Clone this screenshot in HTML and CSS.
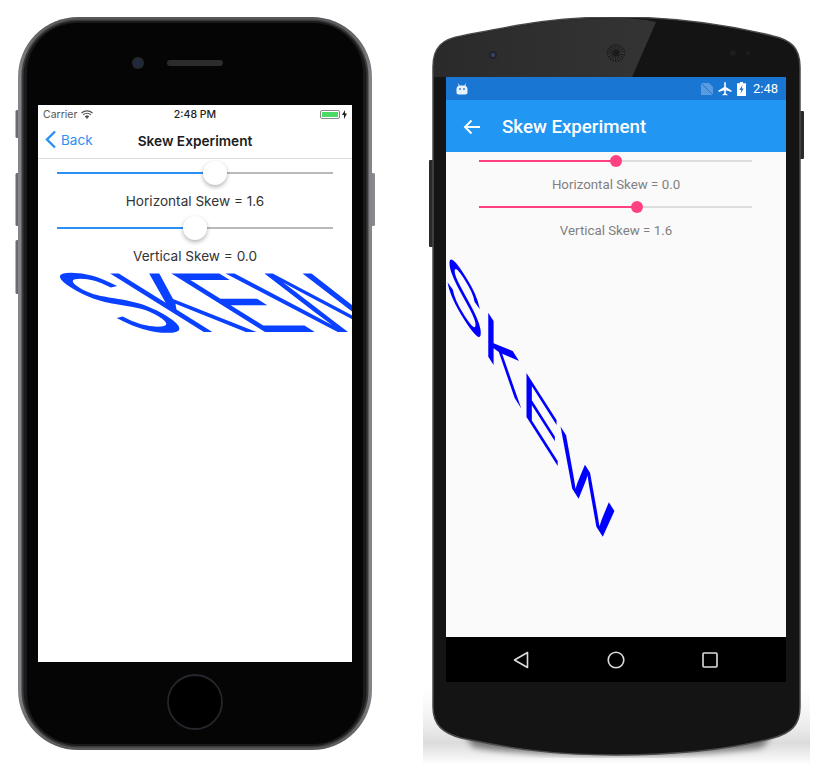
FILE: index.html
```html
<!DOCTYPE html>
<html lang="en">
<head>
  <meta charset="UTF-8">
  <meta name="viewport" content="width=device-width, initial-scale=1.0">
  <title>Skew Experiment</title>
  <link rel="stylesheet" href="styles.css">
</head>
<body>
  <div class="iphone">
    <svg class="body-art" width="362" height="741" viewBox="0 0 362 741">
      <defs>
        <linearGradient id="rim" x1="0" y1="0" x2="0" y2="1">
          <stop offset="0" stop-color="#58585b"/>
          <stop offset="0.08" stop-color="#858589"/>
          <stop offset="0.92" stop-color="#858589"/>
          <stop offset="1" stop-color="#58585b"/>
        </linearGradient>
      </defs>
      <rect x="1.5" y="93" width="4" height="28" rx="1.5" fill="#6b6b70"/>
      <rect x="1.5" y="156" width="4" height="53" rx="1.5" fill="#6b6b70"/>
      <rect x="1.5" y="223" width="4" height="54" rx="1.5" fill="#6b6b70"/>
      <rect x="356.5" y="156" width="4.5" height="53" rx="1.5" fill="#8a8a8e"/>
      <rect x="4" y="0" width="354" height="733" rx="60" fill="url(#rim)"/>
      <rect x="7.5" y="2.5" width="347" height="728" rx="57" fill="#3a3a3c"/>
      <rect x="9.5" y="4" width="343" height="725" rx="55" fill="#1a1a1b"/>
      <rect x="13" y="6" width="336" height="721" rx="50" fill="#050505"/>
      <circle cx="124" cy="46" r="6" fill="#26282d"/>
      <circle cx="124" cy="46" r="3" fill="#1c2a4a"/>
      <rect x="153" y="43" width="56" height="6" rx="3" fill="#2c2c2e"/>
      <circle cx="181" cy="685" r="27" fill="#000" stroke="#23262b" stroke-width="1.8"/>
    </svg>
    <main class="ios-screen">
      <div class="ios-status">
        <span class="carrier">Carrier
          <svg width="12" height="9" viewBox="0 0 12 9"><path d="M0.5 3 A8 8 0 0 1 11.5 3 M2.2 4.8 A5.4 5.4 0 0 1 9.8 4.8" fill="none" stroke="#555" stroke-width="1.2"/><path d="M6 9 L3.8 6.4 A3 3 0 0 1 8.2 6.4 Z" fill="#555"/></svg>
        </span>
        <span class="ios-clock">2:48 PM</span>
        <span class="ios-battery">
          <span class="cell"><span class="charge"></span></span>
          <svg width="5" height="9" viewBox="0 0 5 9"><path d="M3 0 L0 5 H2 L2 9 L5 3.6 H3 Z" fill="#222"/></svg>
        </span>
      </div>
      <nav class="ios-nav">
        <span class="back">
          <svg width="12" height="19" viewBox="0 0 12 19"><path d="M10 1.5 L2 9.5 L10 17.5" fill="none" stroke="#2b8ff5" stroke-width="2.4"/></svg>
          Back
        </span>
        <span class="ios-title">Skew Experiment</span>
      </nav>
      <div class="ios-slider">
        <span class="fill" style="width:158px"></span><span class="thumb"></span><span class="rest"></span>
      </div>
      <p class="ios-label">Horizontal Skew = 1.6</p>
      <div class="ios-slider">
        <span class="fill" style="width:138px"></span><span class="thumb"></span><span class="rest"></span>
      </div>
      <p class="ios-label">Vertical Skew = 0.0</p>
      <div class="skew-h">SKEW</div>
    </main>
  </div>

  <div class="android">
    <svg class="body-art" width="390" height="751" viewBox="0 0 390 751">
      <defs>
        <linearGradient id="floor" x1="0" y1="0" x2="0" y2="1">
          <stop offset="0" stop-color="#fff" stop-opacity="0"/>
          <stop offset="0.75" stop-color="#dcdcdc"/>
          <stop offset="1" stop-color="#fff"/>
        </linearGradient>
        <linearGradient id="gloss" x1="0" y1="0" x2="1" y2="0">
          <stop offset="0" stop-color="#2a2a2a"/>
          <stop offset="1" stop-color="#343434"/>
        </linearGradient>
        <filter id="blur"><feGaussianBlur stdDeviation="3"/></filter>
      </defs>
      <rect x="0" y="660" width="387" height="88" fill="url(#floor)"/>
      <path d="M40 715 H350 L340 730 C280 741 110 741 50 730 Z" fill="#777" filter="url(#blur)"/>
      <rect x="6" y="143" width="5" height="87" rx="1" fill="#2a2a2a"/>
      <rect x="376" y="94" width="5" height="48" rx="1" fill="#2a2a2a"/>
      <path d="M10 50 C10 30 20 22 38 19 C90 9 130 0 193 0 C256 0 310 9 350 19 C368 23 377 31 377 50 V690 C377 708 368 716 350 721 C310 732 256 738 193 738 C130 738 90 732 38 721 C20 716 10 708 10 690 Z" fill="#141414" stroke="#4a4a4a" stroke-width="1.5"/>
      <path d="M11 50 C11 31 21 23 39 20 C90 10 130 1 193 1 C208 1 220 2 233 5 L209 60 H11 Z" fill="url(#gloss)"/>
      <circle cx="70" cy="38" r="4" fill="#20242e"/>
      <circle cx="70" cy="38" r="2" fill="#3a4560"/>
      <circle cx="193" cy="36" r="9" fill="#1b1b1b"/>
      <circle cx="193" cy="36" r="6" fill="none" stroke="#3a3a3a" stroke-width="5" stroke-dasharray="1 1"/>
      <circle cx="310" cy="36" r="3" fill="#1d1d1d"/>
      <circle cx="325" cy="36" r="2" fill="#1d1d1d"/>
    </svg>
    <main class="droid-screen">
      <div class="droid-status">
        <svg class="robot" width="12" height="12" viewBox="0 0 12 12"><path d="M2.5 0.5 L3.6 2.4 H8.4 L9.5 0.5 L10 1 L9.2 2.8 C10.6 3.4 11.5 4.6 11.5 6 V9.5 C11.5 10.8 10.6 11.5 9.5 11.5 H2.5 C1.4 11.5 0.5 10.8 0.5 9.5 V6 C0.5 4.6 1.4 3.4 2.8 2.8 L2 1 Z" fill="#e8f2fb"/><circle cx="4" cy="6" r="0.9" fill="#1976d2"/><circle cx="8" cy="6" r="0.9" fill="#1976d2"/></svg>
        <svg width="12" height="12" viewBox="0 0 12 12"><path d="M0 0 H8 L12 4 V12 H0 Z" fill="#5a9be0"/><path d="M0 0 L12 12" stroke="#1976d2" stroke-width="1"/></svg>
        <svg width="14" height="14" viewBox="0 0 14 14"><path d="M6.2 0.6 C6.2 0 7.8 0 7.8 0.6 V5 L13.5 8.4 V10 L7.8 8.2 V11.4 L9.4 12.6 V13.6 L7 13 L4.6 13.6 V12.6 L6.2 11.4 V8.2 L0.5 10 V8.4 L6.2 5 Z" fill="#fff"/></svg>
        <svg width="9" height="14" viewBox="0 0 9 14"><path d="M3 0 H6 V1.2 H9 V14 H0 V1.2 H3 Z" fill="#fff"/><path d="M5.4 3 L2.4 8 H4.2 L3.6 11.4 L6.6 6.4 H4.8 Z" fill="#1976d2"/></svg>
        <span class="droid-clock">2:48</span>
      </div>
      <div class="droid-bar">
        <svg width="18" height="16" viewBox="0 0 18 16"><path d="M17 8 H2 M8.5 1.5 L2 8 L8.5 14.5" fill="none" stroke="#fff" stroke-width="1.9"/></svg>
        <span class="droid-title">Skew Experiment</span>
      </div>
      <div class="droid-slider first">
        <span class="fill" style="width:137px"></span><span class="thumb"></span><span class="rest"></span>
      </div>
      <p class="droid-label">Horizontal Skew = 0.0</p>
      <div class="droid-slider">
        <span class="fill" style="width:158px"></span><span class="thumb"></span><span class="rest"></span>
      </div>
      <p class="droid-label">Vertical Skew = 1.6</p>
      <div class="skew-v">SKEW</div>
    </main>
    <div class="droid-nav">
      <svg width="16" height="18" viewBox="0 0 16 18"><path d="M14.5 1.5 V16.5 L1.5 9 Z" fill="none" stroke="#ddd" stroke-width="1.6" stroke-linejoin="round"/></svg>
      <svg width="18" height="18" viewBox="0 0 18 18"><circle cx="9" cy="9" r="7.8" fill="none" stroke="#ddd" stroke-width="1.6"/></svg>
      <svg width="16" height="16" viewBox="0 0 16 16"><rect x="1" y="1" width="14" height="14" rx="1" fill="none" stroke="#ddd" stroke-width="1.6"/></svg>
    </div>
  </div>
</body>
</html>
```

FILE: styles.css
```css
body {
  margin: 0;
  background-color: #fff;
  display: flex;
  align-items: flex-start;
  height: 768px;
  overflow: hidden;
}

.body-art {
  position: absolute;
  left: 0;
  top: 0;
}

/* iPhone */
.iphone {
  position: relative;
  width: 362px;
  height: 741px;
  margin: 17px 0 0 14px;
  padding: 88px 0 0 24px;
  box-sizing: border-box;
}

.ios-screen {
  position: relative;
  width: 314px;
  height: 557px;
  background-color: #fff;
  overflow: hidden;
  font-family: Inter, 'Liberation Sans', sans-serif;
  color: #333;
}

.ios-status {
  height: 18px;
  padding: 0 5px;
  display: grid;
  grid-template-columns: 1fr auto 1fr;
  align-items: center;
  font-size: 10.5px;
}

.carrier {
  color: #555;
  display: flex;
  align-items: center;
  gap: 4px;
}

.ios-clock {
  font-weight: 500;
  color: #222;
}

.ios-battery {
  justify-self: end;
  display: flex;
  align-items: center;
  gap: 2px;
}

.cell {
  width: 20px;
  height: 9px;
  padding: 1px;
  box-sizing: border-box;
  border: 1px solid #888;
  border-radius: 2px;
  display: flex;
}

.charge {
  flex: 1;
  background-color: #4cd964;
}

.ios-nav {
  position: relative;
  height: 35px;
  border-bottom: 1px solid #ddd;
  display: flex;
  align-items: center;
  justify-content: center;
}

.back {
  position: absolute;
  left: 7px;
  top: 7px;
  display: flex;
  align-items: center;
  gap: 4px;
  color: #2b8ff5;
  font-size: 13.5px;
}

.ios-title {
  font-size: 13.7px;
  font-weight: 600;
  color: #1c1c1c;
}

.ios-slider {
  margin: 0 19px;
  height: 28px;
  display: flex;
  align-items: center;
}

.ios-slider .fill {
  height: 2px;
  background-color: #2b8ff5;
}

.ios-slider .rest {
  flex: 1;
  height: 2px;
  background-color: #b9b9b9;
}

.ios-slider .thumb {
  width: 24px;
  height: 24px;
  margin: 0 -12px;
  border-radius: 50%;
  background-color: #fff;
  box-shadow: 0 2px 4px rgba(0, 0, 0, 0.3);
  position: relative;
}

.ios-label {
  margin: 0;
  height: 27px;
  line-height: 28px;
  text-align: center;
  font-size: 13.6px;
}

.skew-h {
  margin: 3px 0 0 1px;
  height: 62px;
  line-height: 62px;
  font-family: 'Liberation Sans', sans-serif;
  font-size: 85px;
  color: #0a40ff;
  white-space: nowrap;
  transform-origin: 0 0;
  transform: skewX(58deg) scaleX(1.08);
}

/* Android */
.android {
  position: relative;
  width: 390px;
  height: 751px;
  margin: 17px 0 0 47px;
  padding: 60px 0 0 23px;
  box-sizing: border-box;
}

.droid-screen {
  position: relative;
  width: 340px;
  height: 560px;
  background-color: #fafafa;
  overflow: hidden;
  font-family: Roboto, sans-serif;
}

.droid-status {
  height: 23px;
  padding: 0 8px 0 10px;
  background-color: #1976d2;
  display: flex;
  align-items: center;
  justify-content: flex-end;
  gap: 5px;
}

.robot {
  margin-right: auto;
}

.droid-clock {
  margin-left: 2px;
  color: #fff;
  font-size: 13px;
}

.droid-bar {
  height: 52px;
  padding: 2px 0 0 17px;
  box-sizing: border-box;
  background-color: #2196f3;
  display: flex;
  align-items: center;
  gap: 21px;
}

.droid-title {
  color: #fff;
  font-size: 18.7px;
  font-weight: 500;
}

.droid-slider {
  margin: 0 34px 0 33px;
  height: 20px;
  display: flex;
  align-items: center;
}

.droid-slider.first {
  margin-top: -1px;
}

.droid-slider .fill {
  height: 2px;
  background-color: #ff4081;
}

.droid-slider .rest {
  flex: 1;
  height: 2px;
  background-color: #ddd;
}

.droid-slider .thumb {
  width: 12px;
  height: 12px;
  margin: 0 -6px;
  border-radius: 50%;
  background-color: #ff4081;
  position: relative;
}

.droid-label {
  margin: 0;
  height: 26px;
  line-height: 28px;
  text-align: center;
  font-size: 13.3px;
  color: #808080;
}

.skew-v {
  margin: 1px 0 0 -1px;
  width: 180px;
  height: 46px;
  line-height: 46px;
  font-family: 'Liberation Sans', sans-serif;
  font-size: 64px;
  color: #00f;
  white-space: nowrap;
  transform-origin: 0 0;
  transform: skewY(57.5deg) scaleX(0.9);
}

.droid-nav {
  position: relative;
  width: 340px;
  height: 45px;
  background-color: #000;
  display: flex;
  align-items: center;
  justify-content: space-between;
  padding: 0 68px 0 67px;
  box-sizing: border-box;
}
```
